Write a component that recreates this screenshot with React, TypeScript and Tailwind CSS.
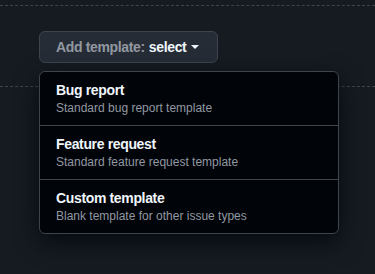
import React from "react";

const templates = [
  { title: "Bug report", desc: "Standard bug report template" },
  { title: "Feature request", desc: "Standard feature request template" },
  { title: "Custom template", desc: "Blank template for other issue types" },
];

export default function App() {
  return (
    <div
      className="w-[375px] h-[274px] bg-[#161b22] overflow-hidden pt-[5px]"
      style={{ fontFamily: '"Liberation Sans", Arial, sans-serif' }}
    >
      {/* dashed section */}
      <div className="border-t border-b border-dashed border-[#3d444d] pt-[25px] pb-[23px] px-[39px]">
        <div className="relative w-max">
          <button className="h-8 flex items-center pl-4 pr-[18px] rounded-md bg-[#262c36] border border-[#3d444d] text-sm font-semibold leading-5 tracking-[-0.35px]">
            <span className="text-[#9198a1]">Add template:</span>
            <span className="text-[#f0f6fc] ml-1">select</span>
            <svg width="8" height="4" viewBox="0 0 8 4" className="text-[#f0f6fc] ml-[5px]" fill="currentColor">
              <path d="M0 0h8L4 4Z" />
            </svg>
          </button>

          {/* dropdown menu */}
          <div className="absolute left-0 top-10 w-[300px] z-10 rounded-md border border-[#3d444d] bg-[#010409] shadow-[0_8px_24px_rgba(1,4,9,0.75)] overflow-hidden">
            {templates.map((t, i) => (
              <div
                key={t.title}
                className={`px-4 py-2 ${i > 0 ? "border-t border-[#3d444d]" : ""}`}
              >
                <div className="text-sm font-semibold leading-5 tracking-[-0.35px] text-[#f0f6fc]">{t.title}</div>
                <div className="text-xs leading-[17px] text-[#9198a1]">{t.desc}</div>
              </div>
            ))}
          </div>
        </div>
      </div>
    </div>
  );
}
